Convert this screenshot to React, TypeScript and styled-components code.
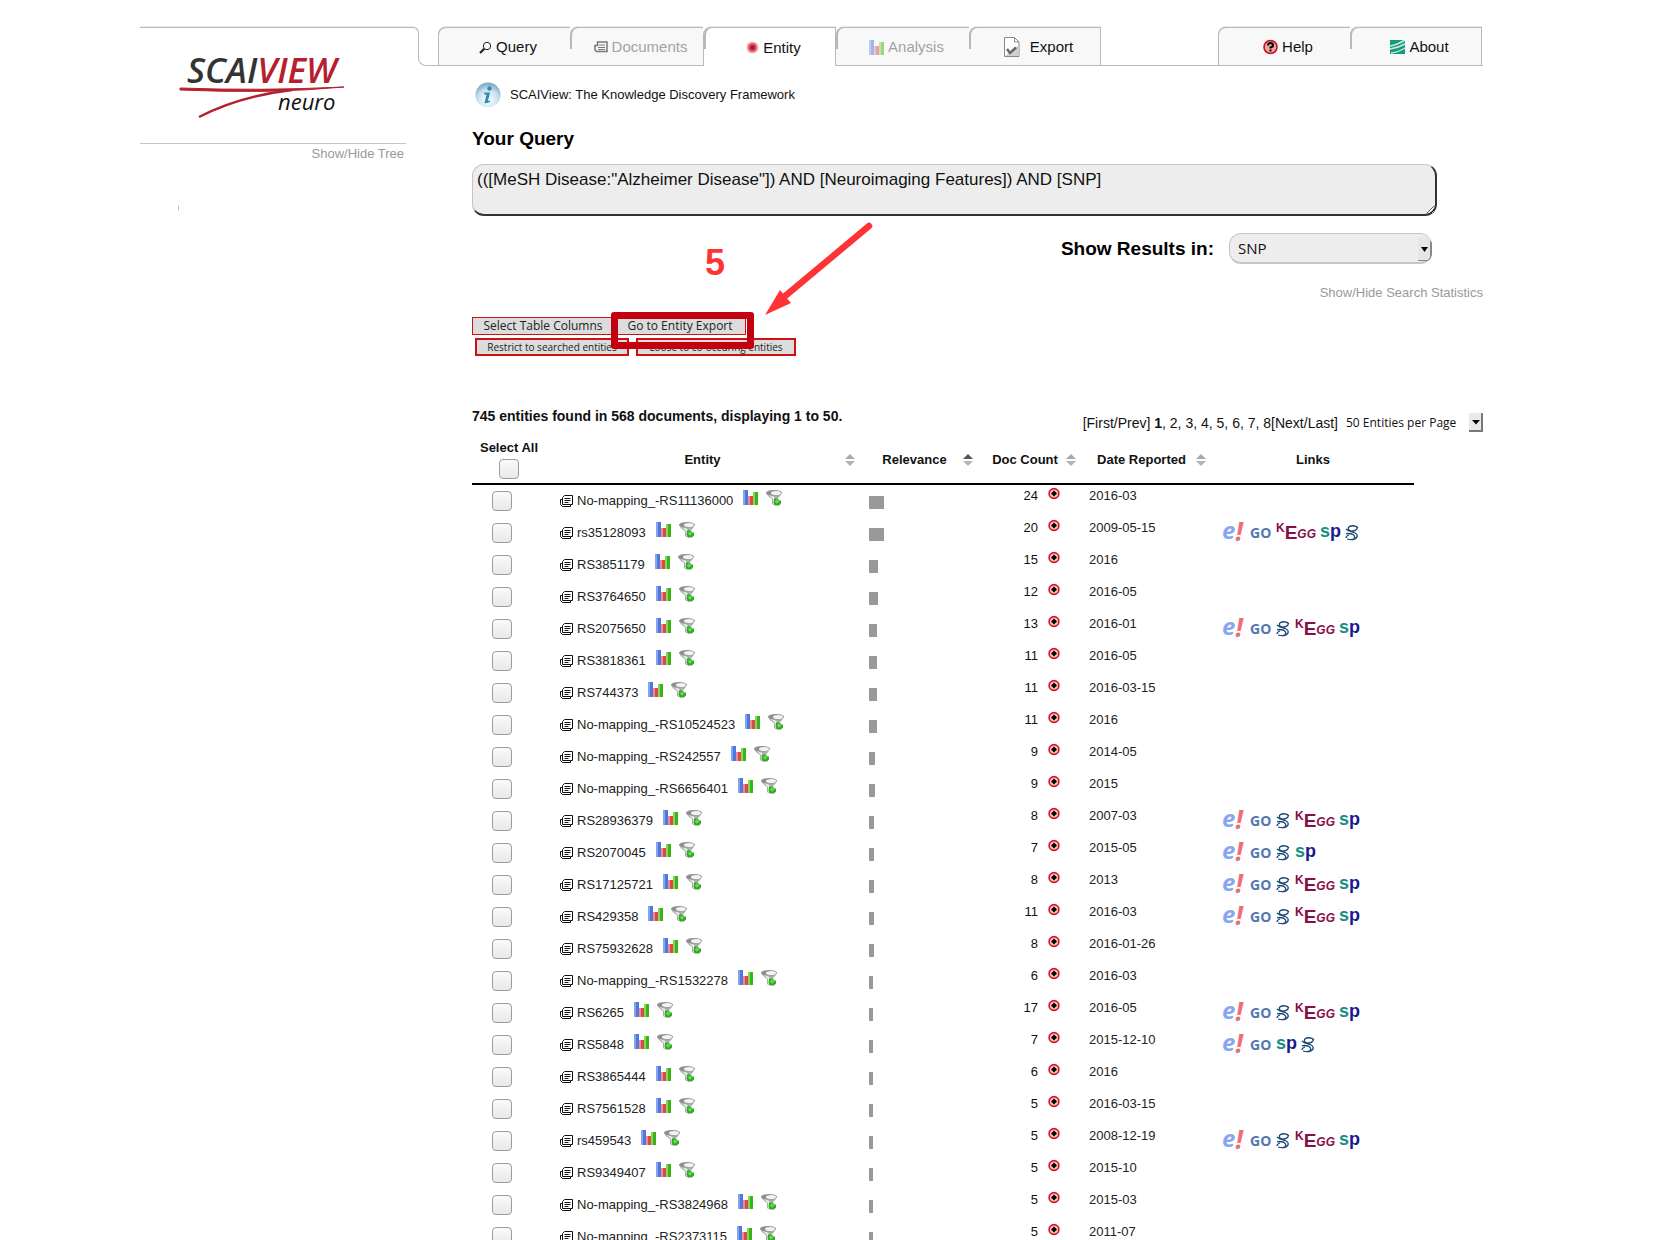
import React from "react";
import styled, { createGlobalStyle, css } from "styled-components";

const sans = `"Liberation Sans", Arial, sans-serif`;
const human = `"Open Sans", "Noto Sans", sans-serif`;
const line = "#b8b8b8";

const GlobalStyle = createGlobalStyle`
  *, *::before, *::after { box-sizing: border-box; }
  body { margin: 0; background: #fff; color: #111; font: 13px/16px ${sans}; }
  button, input, select, textarea { font: inherit; color: inherit; margin: 0; }
  svg { display: block; flex: none; overflow: visible; }
`;

const Page = styled.div`
  height: 100vh;
  overflow: hidden;
  padding: 27px 171px 0 140px;
`;

/* ---------- header ---------- */
const Header = styled.header`
  display: flex;
  height: 39px;
`;
const Cap = styled.div`
  flex: none;
  width: 279px;
  height: 32px;
  border: solid ${line};
  border-width: 1px 1px 0 0;
  border-top-right-radius: 6px;
  box-shadow: 0 -1px #ececec;
`;
const Curve = styled.div`
  flex: none;
  align-self: flex-end;
  width: 8px;
  height: 8px;
  margin-left: -1px;
  border: solid ${line};
  border-width: 0 0 1px 1px;
  border-bottom-left-radius: 8px;
`;
const TabBar = styled.nav`
  flex: 1;
  display: flex;
  justify-content: space-between;
  padding: 0 1px 0 12px;
  border-bottom: 1px solid ${line};
`;
const TabGroup = styled.div`
  display: flex;
`;
const Tab = styled.button<{ $active?: boolean; $dim?: boolean; $last?: boolean; $first?: boolean }>`
  position: relative;
  display: flex;
  align-items: center;
  justify-content: center;
  gap: 4px;
  width: ${(p) => (p.$first || p.$last ? 132 : 133)}px;
  height: 38px;
  padding: 1px 0 0 8px;
  border: 0;
  border-top: 1px solid ${line};
  border-top-left-radius: 8px;
  box-shadow: 0 -1px #ececec;
  background: #f8f8f8;
  font-size: 15px;
  color: ${(p) => (p.$dim ? "#a3a3a3" : "#111")};
  ${(p) => p.$last && css`border-right: 1px solid ${line};`}
  ${(p) =>
    p.$active &&
    css`
      height: 39px;
      background: #fff;
      border-left: 1px solid ${line};
      border-right: 1px solid ${line};
    `}
  &::before {
    content: "";
    position: absolute;
    left: 0;
    top: -1px;
    width: 10px;
    height: ${(p) => (p.$first ? "38px" : "22px")};
    border: solid ${line};
    border-width: 1px 0 0 ${(p) => (p.$first ? "1px" : "2px")};
    border-top-left-radius: 8px;
  }
`;

/* ---------- body columns ---------- */
const Columns = styled.div`
  display: grid;
  grid-template-columns: 266px minmax(0, 1fr);
  column-gap: 66px;
`;
const Sidebar = styled.aside`
  display: flex;
  flex-direction: column;
`;
const LogoBox = styled.div`
  height: 78px;
  padding-left: 40px;
  border-bottom: 1px solid #c4c4c4;
`;
const LogoSvg = styled.svg`
  margin-top: -16px;
`;
const MutedLink = styled.a`
  align-self: flex-end;
  color: #999;
  text-decoration: none;
`;
const TreeLink = styled(MutedLink)`
  padding: 2px 2px 0 0;
`;
const TreeMark = styled.div`
  width: 1px;
  height: 4px;
  margin: 44px 0 0 38px;
  background: #bbb;
`;
const Main = styled.main`
  display: flex;
  flex-direction: column;
  padding-top: 16px;
`;
const Intro = styled.div`
  display: flex;
  align-items: center;
  gap: 9px;
  height: 26px;
  padding-left: 3px;
`;
const Heading = styled.label`
  font-size: 19px;
  line-height: 24px;
  font-weight: bold;
  color: #000;
`;
const QueryHeading = styled(Heading)`
  margin-top: 19px;
`;
const QueryBox = styled.textarea`
  height: 52px;
  margin: 13px 46px 0 0;
  padding: 5px 4px;
  border: solid;
  border-width: 1px 2px 2px 1px;
  border-color: #c4c4c4 #333 #333 #c4c4c4;
  border-radius: 12px;
  background: #ededed;
  font-size: 17px;
  line-height: 20px;
`;
const ResultsRow = styled.div`
  display: flex;
  align-items: center;
  justify-content: flex-end;
  gap: 15px;
  margin: 17px 51px 0 0;
`;
const SelectWrap = styled.span`
  position: relative;
  display: block;
`;
const ResultSelect = styled.select`
  display: block;
  appearance: none;
  width: 203px;
  height: 31px;
  padding: 0 8px;
  border: solid #c6c6c6;
  border-width: 1px 1px 2px;
  border-radius: 12px;
  background: #ededed;
  font: 15px ${human};
`;
const Chevron = styled.svg`
  position: absolute;
  right: 0;
  top: 4px;
  pointer-events: none;
`;
const StatsLink = styled(MutedLink)`
  margin-top: 21px;
`;

/* ---------- actions and call-out ---------- */
const Actions = styled.section`
  position: relative;
  display: flex;
  flex-direction: column;
  gap: 3px;
  margin-top: 16px;
`;
const ActionRow = styled.div<{ $inset?: boolean }>`
  display: flex;
  gap: ${(p) => (p.$inset ? "7px" : "0")};
  padding-left: ${(p) => (p.$inset ? "3px" : "0")};
`;
const ActionButton = styled.button<{ $w: number; $small?: boolean }>`
  width: ${(p) => p.$w}px;
  height: 18px;
  padding: 0;
  border: ${(p) => (p.$small ? 2 : 1)}px solid #cc1111;
  background: #dcdcdc;
  font: ${(p) => (p.$small ? "10px/14px" : "12px/16px")} ${human};
  color: #222;
  white-space: nowrap;
`;
const Frame = styled.div`
  position: absolute;
  left: 139px;
  top: -5px;
  width: 143px;
  height: 37px;
  border: 7px solid #c3000f;
  border-radius: 3px;
`;
const Step = styled.strong`
  position: absolute;
  left: 233px;
  top: -74px;
  font-size: 36px;
  line-height: 40px;
  color: #ff3336;
`;
const Arrow = styled.svg`
  position: absolute;
  left: 290px;
  top: -96px;
`;

/* ---------- results ---------- */
const Summary = styled.div`
  display: flex;
  justify-content: space-between;
  height: 30px;
  margin-top: 50px;
`;
const Count = styled.strong`
  font-size: 14px;
  line-height: 20px;
`;
const Pager = styled.div`
  display: flex;
  align-items: center;
  gap: 8px;
  height: 20px;
  margin-top: 7px;
`;
const Pages = styled.span`
  font-size: 14px;
`;
const PageLink = styled.a`
  color: inherit;
  text-decoration: none;
`;
const SizeSelect = styled.select`
  display: block;
  appearance: none;
  width: 137px;
  height: 20px;
  padding: 0;
  border: 0;
  background: none;
  font: 12px/20px ${human};
`;
const SizeButton = styled.svg`
  position: absolute;
  right: 0;
  top: 0;
  pointer-events: none;
`;
const TableWrap = styled.div`
  padding-right: 69px;
`;
const Table = styled.table`
  width: 100%;
  table-layout: fixed;
  border-collapse: separate;
  border-spacing: 0;
`;
const Th = styled.th`
  height: 49px;
  padding: 0 5px 0 6px;
  border-bottom: 2px solid #000;
  font-size: 13px;
`;
const ThInner = styled.div`
  display: flex;
  align-items: center;
  justify-content: center;
`;
const ThLabel = styled.span`
  flex: 1;
`;
const SelectAll = styled.label`
  display: flex;
  flex-direction: column;
  align-items: center;
  gap: 3px;
  width: 62px;
`;
const Check = styled.input`
  display: block;
  appearance: none;
  width: 20px;
  height: 20px;
  border: 1px solid #9c9c9c;
  border-radius: 4px;
  background: linear-gradient(#fafafa, #e9e9e9);
`;
const Td = styled.td<{ $mid?: boolean }>`
  height: 32px;
  padding: 0;
  vertical-align: ${(p) => (p.$mid ? "middle" : "top")};
`;
const CheckCell = styled(Td)`
  padding-left: 20px;
`;
const EntityCell = styled.div`
  display: flex;
  align-items: center;
  height: 31px;
  padding-left: 6px;
`;
const EntityName = styled.a`
  margin: 0 10px 0 4px;
  color: #222;
  text-decoration: none;
`;
const RowIcons = styled.span`
  display: flex;
  gap: 8px;
  padding-bottom: 6px;
`;
const Bar = styled.div`
  height: 13px;
  margin: 2px 0 0 9px;
  background: #999;
`;
const DocCell = styled.div`
  display: flex;
  gap: 10px;
  justify-content: flex-end;
  padding: 3px 21px 0 0;
`;
const DateCell = styled.div`
  padding: 3px 0 0 8px;
  color: #222;
`;
const LinkCell = styled.div`
  display: flex;
  align-items: center;
  gap: 5px;
  padding-left: 11px;
`;

/* ---------- icons ---------- */
const BarsIcon = ({ dim }: { dim?: boolean }) => (
  <svg width="15" height="15" viewBox="0 0 15 15" opacity={dim ? 0.5 : 1}>
    <rect width="5" height="15" fill="#4f78dc" />
    <rect width="2" height="15" fill="#86a5ee" />
    <rect x="5" y="6" width="5" height="9" fill="#d84a50" />
    <rect x="5" y="6" width="2" height="9" fill="#f08a8c" />
    <rect x="10" y="2" width="5" height="13" fill="#3db21a" />
    <rect x="10" y="2" width="2" height="13" fill="#82dc55" />
  </svg>
);
const FilterIcon = () => (
  <svg width="16" height="16" viewBox="0 0 16 16">
    <path d="M0 2.500Q1 6 6 9V14Q8 16 11 15V9Q15 6 16 2.500Z" fill="#a9aca9" />
    <path d="M3 5Q6 8 7 9V14L8.500 14.500V7Z" fill="#ededed" />
    <ellipse cx="8" cy="2.800" rx="8" ry="2.800" fill="#8d908d" />
    <ellipse cx="10" cy="3" rx="5" ry="2" fill="#f2f2f2" />
    <path d="M8 8.500h4l1 2h2v3l-2 2h-4l-1.500-2.500z" fill="#2fae24" />
    <path d="M11 9.500v4M9 11.500h4" stroke="#7fdc6e" strokeWidth="1.200" />
  </svg>
);
const DocIcon = () => (
  <svg width="13" height="12" viewBox="0 0 13 12" fill="none" stroke="#111">
    <path d="M2.500 9.500v-7l2-2h8v9h-2" />
    <path d="M.5 8.500v1l2 2h8v-2h-8M.5 8.500v-4h2" />
    <path d="M4.500 3.500h6M4.500 5.500h6M4.500 7.500h4" />
  </svg>
);
const DocsTabIcon = () => (
  <svg width="14" height="12" viewBox="0 0 14 12" fill="none" stroke="#777">
    <path d="M3.500 1h9.500v9.500h-10.500l-1.500-1.500v-4.500h2.500z" strokeWidth="1.500" />
    <path d="M5 4h6M4 6.500h7M4 8.500h7" />
  </svg>
);
const SearchIcon = () => (
  <svg width="13" height="13" viewBox="0 0 13 13" fill="none" stroke="#222">
    <circle cx="8" cy="5" r="3.700" />
    <path d="M5.300 7.700L1 12" strokeWidth="2.200" />
  </svg>
);
const EntityIcon = () => (
  <svg width="13" height="13" viewBox="0 0 13 13">
    <circle cx="6.500" cy="6.500" r="6" fill="#f0b6bf" />
    <circle cx="6.500" cy="6.500" r="4.500" fill="#dc5a6c" />
    <circle cx="6.500" cy="6.500" r="2.500" fill="#b91531" />
  </svg>
);
const ExportIcon = () => (
  <svg width="22" height="20" viewBox="0 0 22 20">
    <path d="M.5.5h10l4.500 4.500v14.500H.5z" fill="#fff" stroke="#888" />
    <path d="M10.500.5v4.500h4.500" fill="none" stroke="#888" />
    <path d="M1 19l13.500-11v11z" fill="#cfcfcf" />
    <path d="M3 12l3 4 6-5.500" fill="none" stroke="#666" strokeWidth="2.500" />
  </svg>
);
const HelpIcon = () => (
  <svg width="15" height="15" viewBox="0 0 15 15">
    <circle cx="7.500" cy="7" r="6.500" fill="#eda4a4" stroke="#c4121c" strokeWidth="1.600" />
    <path d="M5 5.500Q5 3 7.500 3T10 5.500Q10 7 7.500 7.500V8.500M7.500 9.500v2" fill="none" stroke="#000" strokeWidth="2" />
  </svg>
);
const AboutIcon = () => (
  <svg width="15" height="14" viewBox="0 0 15 14">
    <rect width="15" height="14" fill="#159a80" />
    <path d="M0 6Q7 5 15 0M0 9Q8 8 15 4M1 13Q9 12 15 8" fill="none" stroke="#c8ebe3" strokeWidth="1.500" />
  </svg>
);
const InfoIcon = () => (
  <svg width="26" height="26" viewBox="0 0 26 26">
    <defs>
      <radialGradient id="info" cx=".5" cy=".7" r=".7">
        <stop offset="0" stopColor="#fff" />
        <stop offset=".6" stopColor="#c6e1ef" />
        <stop offset="1" stopColor="#6f9fc0" />
      </radialGradient>
    </defs>
    <circle cx="13" cy="13" r="12.500" fill="url(#info)" />
    <circle cx="14.500" cy="6.500" r="2.200" fill="#2f8db3" />
    <path d="M9.500 10.500h5.500l-2 8.500 2-.5v1.500q-3 1.500-5.500 1l2-8.500h-2.500z" fill="#2f8db3" />
  </svg>
);
const SortIcon = ({ up }: { up?: boolean }) => (
  <svg width="10" height="12" viewBox="0 0 10 12">
    <path d="M0 5L5 0l5 5z" fill={up ? "#555" : "#aaa"} />
    <path d="M0 7l5 5 5-5z" fill="#b5b5b5" />
  </svg>
);
const TargetIcon = () => (
  <svg width="12" height="12" viewBox="0 0 12 12">
    <circle cx="6" cy="5.500" r="4.900" fill="#f3c3b8" stroke="#d6112a" strokeWidth="1.600" />
    <path d="M6 2.500l3 3-3 3-3-3z" fill="#000" />
  </svg>
);
const Logo = () => (
  <LogoSvg width="168" height="72" viewBox="0 0 168 72" role="img" aria-label="SCAIVIEW neuro">
    <g fontFamily={human} fontStyle="italic">
      <text x="7" y="33" fontSize="35" fontWeight="600" fill="#333">
        SCAI<tspan fill="#b5202f">VIEW</tspan>
      </text>
      <text x="98" y="60" fontSize="22" fill="#111">neuro</text>
    </g>
    <path d="M0 38Q80 41 164 37Q90 44 0 40z" fill="#b5202f" stroke="#b5202f" />
    <path d="M19 67Q60 46 112 40" fill="none" stroke="#b5202f" strokeWidth="2.500" />
  </LogoSvg>
);

type LinkKind = "e" | "go" | "kegg" | "sp" | "sw";
const LinkLogo = ({ kind }: { kind: LinkKind }) => {
  if (kind === "e")
    return (
      <svg width="23" height="22" viewBox="0 0 23 22" fontFamily={human} fontWeight="700" fontStyle="italic">
        <text x="0" y="17" fontSize="24" fill="#86a6f2">
          e<tspan dy="2" fontSize="26" fill="#f36c70">!</tspan>
        </text>
      </svg>
    );
  if (kind === "go")
    return (
      <svg width="21" height="22" viewBox="0 0 21 22" fontFamily={human} fontWeight="700">
        <text x="0" y="16" fontSize="14" fill="#5078b0">GO</text>
      </svg>
    );
  if (kind === "kegg")
    return (
      <svg width="39" height="22" viewBox="0 0 39 22" fontFamily={sans} fontWeight="700" fill="#860f47">
        <text x="0" y="10" fontSize="12">
          K<tspan dy="7" fontSize="19">E</tspan>
          <tspan dy="-1" fontSize="12" fontStyle="italic">GG</tspan>
        </text>
      </svg>
    );
  if (kind === "sp")
    return (
      <svg width="20" height="22" viewBox="0 0 20 22" fontFamily={sans} fontWeight="700">
        <text x="0" y="15" fontSize="18" fill="#169085">
          s<tspan fill="#1c1a8c">p</tspan>
        </text>
      </svg>
    );
  return (
    <svg width="14" height="22" viewBox="0 0 14 22" fill="none" stroke="#17456f" strokeWidth="1.300">
      <path d="M13 6Q11 3 6 4Q2 5 4 8Q6 10 9 10.500Q13 12 12 15Q9 19 2 17" />
      <path d="M1 7Q4 10 8 9Q13 8 12 5M1 12Q3 11 7 12Q11 14 9 16M1 16Q1 14 4 13" />
    </svg>
  );
};

/* ---------- data ---------- */
type Row = [name: string, bar: number, docs: number, date: string, links?: LinkKind[]];
const usual: LinkKind[] = ["e", "go", "sw", "kegg", "sp"];
const rows: Row[] = [
  ["No-mapping_-RS11136000", 15, 24, "2016-03"],
  ["rs35128093", 15, 20, "2009-05-15", ["e", "go", "kegg", "sp", "sw"]],
  ["RS3851179", 9, 15, "2016"],
  ["RS3764650", 9, 12, "2016-05"],
  ["RS2075650", 8, 13, "2016-01", usual],
  ["RS3818361", 8, 11, "2016-05"],
  ["RS744373", 8, 11, "2016-03-15"],
  ["No-mapping_-RS10524523", 8, 11, "2016"],
  ["No-mapping_-RS242557", 6, 9, "2014-05"],
  ["No-mapping_-RS6656401", 6, 9, "2015"],
  ["RS28936379", 5, 8, "2007-03", usual],
  ["RS2070045", 5, 7, "2015-05", ["e", "go", "sw", "sp"]],
  ["RS17125721", 5, 8, "2013", usual],
  ["RS429358", 5, 11, "2016-03", usual],
  ["RS75932628", 5, 8, "2016-01-26"],
  ["No-mapping_-RS1532278", 4, 6, "2016-03"],
  ["RS6265", 4, 17, "2016-05", usual],
  ["RS5848", 4, 7, "2015-12-10", ["e", "go", "sp", "sw"]],
  ["RS3865444", 4, 6, "2016"],
  ["RS7561528", 4, 5, "2016-03-15"],
  ["rs459543", 4, 5, "2008-12-19", usual],
  ["RS9349407", 4, 5, "2015-10"],
  ["No-mapping_-RS3824968", 4, 5, "2015-03"],
  ["No-mapping_-RS2373115", 4, 5, "2011-07"],
];
const columns = [
  { title: "Entity", sort: true },
  { title: "Relevance", sort: true, up: true },
  { title: "Doc Count", sort: true },
  { title: "Date Reported", sort: true },
  { title: "Links" },
];

export default function App() {
  return (
    <>
      <GlobalStyle />
      <Page>
        <Header>
          <Cap />
          <Curve />
          <TabBar>
            <TabGroup>
              <Tab $first><SearchIcon />Query</Tab>
              <Tab $dim><DocsTabIcon />Documents</Tab>
              <Tab $active><EntityIcon />Entity</Tab>
              <Tab $dim><BarsIcon dim />Analysis</Tab>
              <Tab $last><ExportIcon />Export</Tab>
            </TabGroup>
            <TabGroup>
              <Tab $first><HelpIcon />Help</Tab>
              <Tab $last><AboutIcon />About</Tab>
            </TabGroup>
          </TabBar>
        </Header>
        <Columns>
          <Sidebar>
            <LogoBox><Logo /></LogoBox>
            <TreeLink href="#tree">Show/Hide Tree</TreeLink>
            <TreeMark />
          </Sidebar>
          <Main>
            <Intro><InfoIcon />SCAIView: The Knowledge Discovery Framework</Intro>
            <QueryHeading htmlFor="query">Your Query</QueryHeading>
            <QueryBox
              id="query"
              defaultValue={'(([MeSH Disease:"Alzheimer Disease"]) AND [Neuroimaging Features]) AND [SNP]'}
            />
            <ResultsRow>
              <Heading htmlFor="results">Show Results in:</Heading>
              <SelectWrap>
                <ResultSelect id="results"><option>SNP</option></ResultSelect>
                <Chevron width="15" height="24" viewBox="0 0 15 24">
                  <path d="M1 0v23h10q4-2 4-6V6q0-4-3-6z" fill="#e6e6e6" />
                  <path d="M1 23h10l2-3V3l2 3v12q-1 4-4 6H1z" fill="#888" />
                  <path d="M4 10h7l-3.500 5z" fill="#000" />
                </Chevron>
              </SelectWrap>
            </ResultsRow>
            <StatsLink href="#stats">Show/Hide Search Statistics</StatsLink>
            <Actions>
              <ActionRow>
                <ActionButton $w={142}>Select Table Columns</ActionButton>
                <ActionButton $w={132}>Go to Entity Export</ActionButton>
              </ActionRow>
              <ActionRow $inset>
                <ActionButton $w={154} $small>Restrict to searched entities</ActionButton>
                <ActionButton $w={160} $small>Loose to co-occuring entities</ActionButton>
              </ActionRow>
              <Frame />
              <Step>5</Step>
              <Arrow width="114" height="98" viewBox="0 0 114 98">
                <path d="M107 5L22 76" stroke="#ff3336" strokeWidth="6.500" strokeLinecap="round" />
                <path d="M3 94L18 69l11 13z" fill="#ff3336" />
              </Arrow>
            </Actions>
            <Summary>
              <Count>745 entities found in 568 documents, displaying 1 to 50.</Count>
              <Pager>
                <Pages>
                  [<PageLink href="#first">First/Prev</PageLink>] <b>1</b>
                  {[2, 3, 4, 5, 6, 7, 8].map((n) => (
                    <React.Fragment key={n}>, <PageLink href={`#p${n}`}>{n}</PageLink></React.Fragment>
                  ))}
                  [<PageLink href="#last">Next/Last</PageLink>]
                </Pages>
                <SelectWrap>
                  <SizeSelect aria-label="Entities per page"><option>50 Entities per Page</option></SizeSelect>
                  <SizeButton width="14" height="19" viewBox="0 0 14 19">
                    <path d="M0 0h14v19H0z" fill="#777" />
                    <path d="M0 0h12v17H0z" fill="#e9e9e9" />
                    <path d="M3 7h8l-4 4.500z" fill="#000" />
                  </SizeButton>
                </SelectWrap>
              </Pager>
            </Summary>
            <TableWrap>
              <Table>
                <colgroup>
                  <col width="82" />
                  <col />
                  <col width="118" />
                  <col width="103" />
                  <col width="130" />
                  <col width="203" />
                </colgroup>
                <thead>
                  <tr>
                    <Th><SelectAll>Select All<Check type="checkbox" /></SelectAll></Th>
                    {columns.map((c) => (
                      <Th key={c.title}>
                        <ThInner>
                          <ThLabel>{c.title}</ThLabel>
                          {c.sort && <SortIcon up={c.up} />}
                        </ThInner>
                      </Th>
                    ))}
                  </tr>
                </thead>
                <tbody>
                  {rows.map(([name, bar, docs, date, links]) => (
                    <tr key={name}>
                      <CheckCell $mid><Check type="checkbox" aria-label={name} /></CheckCell>
                      <Td>
                        <EntityCell>
                          <DocIcon />
                          <EntityName href={`#${name}`}>{name}</EntityName>
                          <RowIcons><BarsIcon /><FilterIcon /></RowIcons>
                        </EntityCell>
                      </Td>
                      <Td $mid><Bar style={{ width: bar }} /></Td>
                      <Td><DocCell>{docs}<TargetIcon /></DocCell></Td>
                      <Td><DateCell>{date}</DateCell></Td>
                      <Td $mid>
                        <LinkCell>{links?.map((k) => <LinkLogo key={k} kind={k} />)}</LinkCell>
                      </Td>
                    </tr>
                  ))}
                </tbody>
              </Table>
            </TableWrap>
          </Main>
        </Columns>
      </Page>
    </>
  );
}
